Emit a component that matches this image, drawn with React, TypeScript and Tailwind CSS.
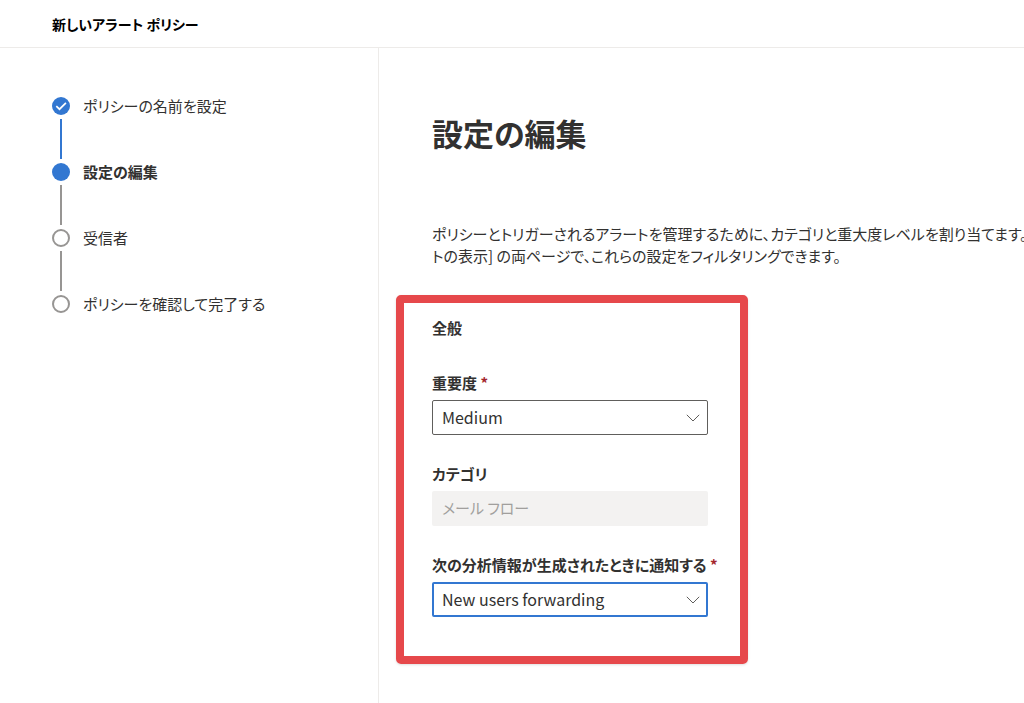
import { useState } from 'react';

type StepStatus = 'done' | 'current' | 'upcoming';

type Step = {
  id: number;
  label: string;
  status: StepStatus;
};

const steps: Step[] = [
  { id: 1, label: 'ポリシーの名前を設定', status: 'done' },
  { id: 2, label: '設定の編集', status: 'current' },
  { id: 3, label: '受信者', status: 'upcoming' },
  { id: 4, label: 'ポリシーを確認して完了する', status: 'upcoming' },
];

function StepMarker({ status }: { status: StepStatus }) {
  if (status === 'upcoming') {
    return <span className="size-[18px] shrink-0 rounded-full border-2 border-[#979593]" />;
  }

  return (
    <span className="flex size-[18px] shrink-0 items-center justify-center rounded-full bg-[#3277d1]">
      {status === 'done' && (
        <svg viewBox="0 0 18 18" className="size-[18px]" fill="none" stroke="white" strokeWidth="1.7" aria-hidden="true">
          <path d="M4.3 9.2 7.5 12.2 13.9 5.8" />
        </svg>
      )}
    </span>
  );
}

type SelectFieldProps = {
  id: string;
  label: string;
  value: string;
  options: string[];
  active?: boolean;
  onChange: (value: string) => void;
};

function SelectField({ id, label, value, options, active, onChange }: SelectFieldProps) {
  return (
    <div className="flex flex-col gap-1.5">
      <label htmlFor={id} className="leading-[22px] font-bold whitespace-nowrap">
        {label} <span className="text-[#a4262c]">*</span>
      </label>
      <div className="relative max-w-[276px]">
        <select
          id={id}
          value={value}
          onChange={(e) => onChange(e.target.value)}
          className={`block h-[35px] w-full appearance-none rounded-xs bg-white pr-8 pb-0.5 text-base outline-none ${
            active ? 'border-2 border-[#3277d1] pl-2' : 'border border-[#605e5c] pl-[9px]'
          }`}
        >
          {options.map((option) => (
            <option key={option}>{option}</option>
          ))}
        </select>
        <svg
          viewBox="0 0 14 8"
          className="pointer-events-none absolute top-[14px] right-2 h-2 w-[14px]"
          fill="none"
          stroke="#605e5c"
          strokeWidth="1"
          aria-hidden="true"
        >
          <path d="M.8 .8 7 7 13.2 .8" />
        </svg>
      </div>
    </div>
  );
}

function App() {
  const [severity, setSeverity] = useState('Medium');
  const [insight, setInsight] = useState('New users forwarding');

  return (
    <div
      lang="ja"
      className="flex min-h-screen flex-col overflow-hidden bg-white font-['Noto_Sans_CJK_JP',sans-serif] text-[15px] text-[#323130] [font-feature-settings:'palt']"
    >
      <header className="flex h-12 items-center border-b border-[#edebe9] px-[52px]">
        <p className="text-sm font-bold text-black">新しいアラート ポリシー</p>
      </header>

      <div className="flex flex-1">
        <nav className="w-[379px] shrink-0 border-r border-[#edebe9] px-[52px] pt-[49px]">
          <ol className="flex flex-col gap-1">
            {steps.map((step, index) => (
              <li key={step.id} className="flex flex-col gap-1">
                <div
                  className={`flex h-[18px] items-center gap-[13px] ${step.status === 'current' ? 'font-bold' : ''}`}
                  aria-current={step.status === 'current' ? 'step' : undefined}
                >
                  <StepMarker status={step.status} />
                  {step.label}
                </div>
                {index < steps.length - 1 && (
                  <span className={`ml-2 h-10 w-0.5 ${step.status === 'done' ? 'bg-[#3277d1]' : 'bg-[#979593]'}`} />
                )}
              </li>
            ))}
          </ol>
        </nav>

        <main className="min-w-0 flex-1 pt-[62px] pl-[17px]">
          <div className="pl-9">
            <h1 className="text-[31px] leading-[46px] font-bold">設定の編集</h1>
            <p className="mt-[67px] leading-[22px] whitespace-nowrap">
              ポリシーとトリガーされるアラートを管理するために、カテゴリと重大度レベルを割り当てます。
              <br />
              トの表示] の両ページで、これらの設定をフィルタリングできます。
            </p>
          </div>

          <section className="mt-7 max-w-[352px] rounded-[5px] border-8 border-[#e6484b] pt-[13px] pb-[39px] pl-7 shadow-sm">
            <h2 className="leading-6 font-bold">全般</h2>
            <form className="mt-8 flex flex-col gap-7">
              <SelectField
                id="severity"
                label="重要度"
                value={severity}
                options={['Low', 'Medium', 'High']}
                onChange={setSeverity}
              />
              <div className="flex flex-col gap-1.5">
                <label htmlFor="category" className="leading-[22px] font-bold">カテゴリ</label>
                <input
                  id="category"
                  value="メール フロー"
                  disabled
                  className="h-[35px] w-full max-w-[276px] rounded-xs bg-[#f3f2f1] px-[10px] pb-0.5 text-[#a19f9d]"
                />
              </div>
              <SelectField
                id="insight"
                label="次の分析情報が生成されたときに通知する"
                value={insight}
                options={['New users forwarding']}
                active
                onChange={setInsight}
              />
            </form>
          </section>
        </main>
      </div>
    </div>
  );
}

export default App;
